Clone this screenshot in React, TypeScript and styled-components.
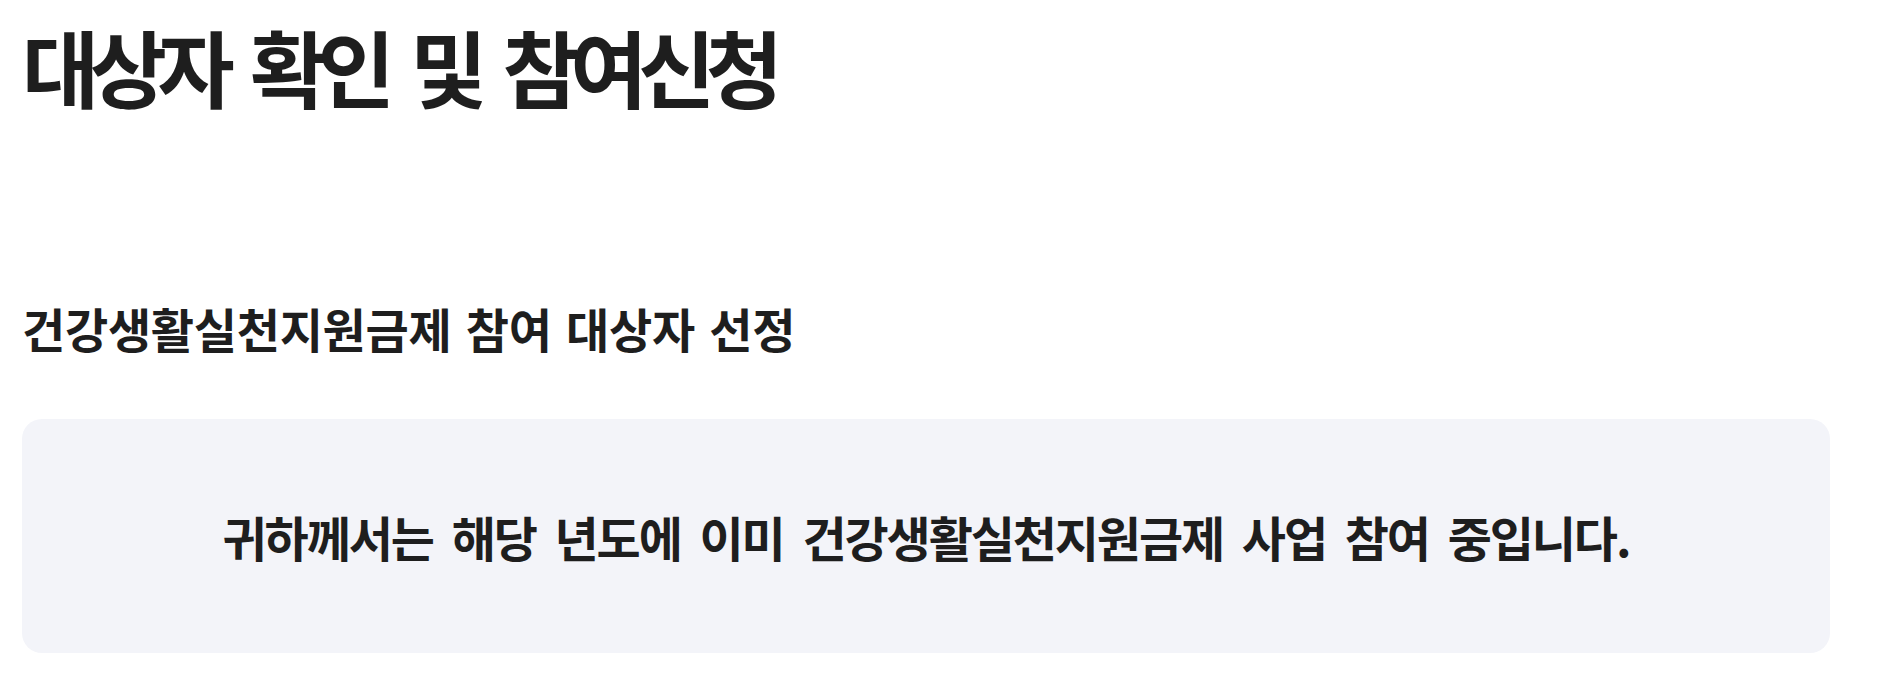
import React from "react";
import styled, { createGlobalStyle } from "styled-components";

const GlobalStyle = createGlobalStyle`
  html, body {
    margin: 0;
    padding: 0;
    background: #ffffff;
  }
  body {
    font-family: "Noto Sans CJK KR", "Noto Sans", sans-serif;
    color: #1e1e1e;
  }
`;

const Page = styled.main`
  padding: 24px 52px 0 22px;
`;

const Title = styled.h1`
  margin: 0;
  font-size: 84px;
  font-weight: 700;
  line-height: 1;
  letter-spacing: -9.5px;
  word-spacing: 15px;
`;

const SubTitle = styled.h2`
  margin: 196px 0 0;
  font-size: 47px;
  font-weight: 700;
  line-height: 1;
  letter-spacing: -0.3px;
  word-spacing: 4px;
`;

const NoticeBox = styled.section`
  margin-top: 68px;
  height: 234px;
  border-radius: 20px;
  background: #f3f4f9;
  display: flex;
  align-items: center;
  justify-content: center;
`;

const NoticeText = styled.p`
  margin: 0;
  font-size: 48px;
  font-weight: 700;
  line-height: 1;
  letter-spacing: -2.1px;
  word-spacing: 10px;
`;

export default function App() {
  return (
    <>
      <GlobalStyle />
      <Page>
        <Title>대상자 확인 및 참여신청</Title>
        <SubTitle>건강생활실천지원금제 참여 대상자 선정</SubTitle>
        <NoticeBox>
          <NoticeText>
            귀하께서는 해당 년도에 이미 건강생활실천지원금제 사업 참여 중입니다.
          </NoticeText>
        </NoticeBox>
      </Page>
    </>
  );
}
